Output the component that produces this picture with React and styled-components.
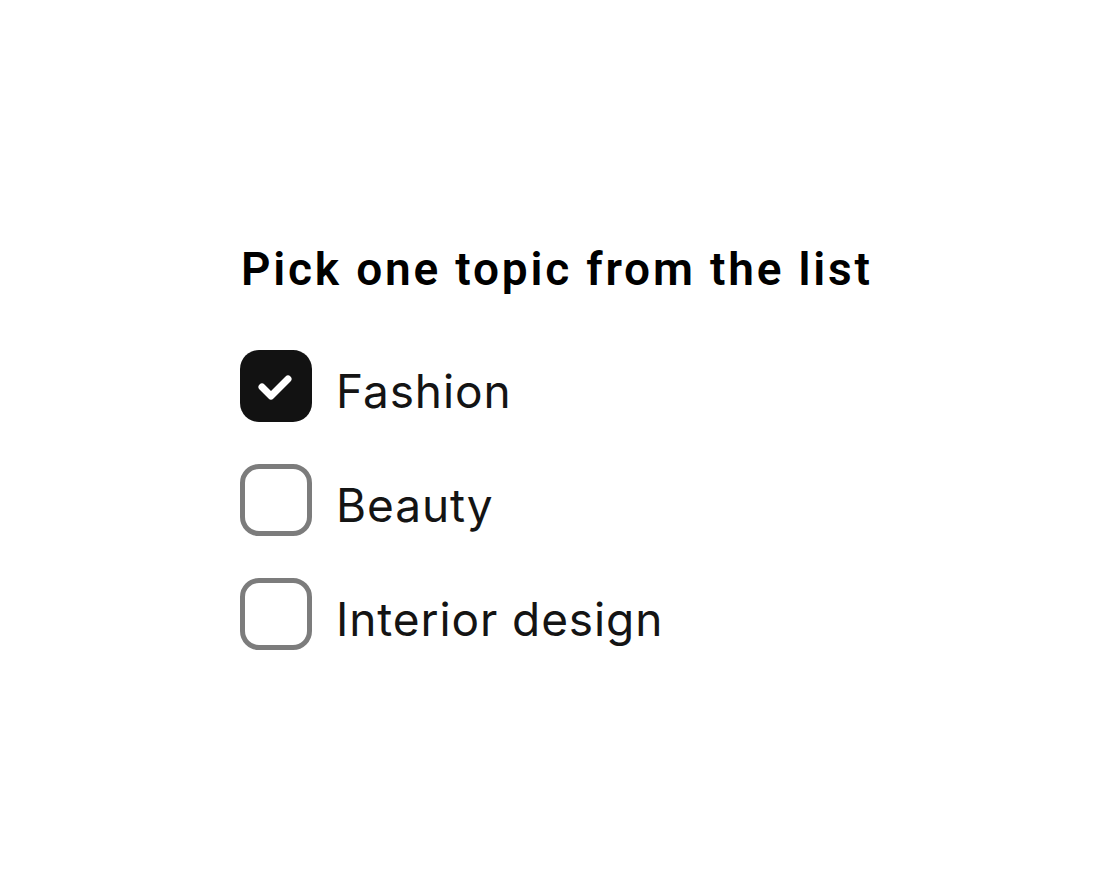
import React, { useState } from "react";
import styled, { createGlobalStyle } from "styled-components";

const Global = createGlobalStyle`
  html, body { margin: 0; padding: 0; background: #fff; }
  body { font-family: Inter, "Noto Sans", sans-serif; }
`;

const Page = styled.div`
  width: 1107px;
  height: 888px;
  display: flex;
  justify-content: flex-start;
  align-items: flex-start;
  padding: 242px 0 0 240px;
  box-sizing: border-box;
`;

const Group = styled.fieldset`
  border: 0;
  margin: 0;
  padding: 0;
  display: flex;
  flex-direction: column;
`;

const Legend = styled.legend`
  padding: 0;
  margin: 0 0 54px 1px;
  font-family: Roboto, sans-serif;
  font-weight: 600;
  font-size: 46px;
  line-height: 54px;
  color: #000;
  letter-spacing: 2.8px;
`;

const List = styled.div`
  display: flex;
  flex-direction: column;
  gap: 42px;
`;

const Row = styled.label`
  display: flex;
  align-items: center;
  gap: 24px;
  cursor: pointer;
`;

const Box = styled.span`
  width: 72px;
  height: 72px;
  box-sizing: border-box;
  border-radius: 19px;
  display: flex;
  align-items: center;
  justify-content: center;
  background: ${(p) => (p.$checked ? "#121212" : "#fff")};
  border: ${(p) => (p.$checked ? "none" : "5px solid #7c7c7c")};
`;

const Check = styled.svg`
  display: block;
`;

const Label = styled.span`
  font-family: Inter, sans-serif;
  font-size: 46px;
  letter-spacing: 0.9px;
  color: #141414;
  line-height: 1;
  padding-top: 10px;
`;

const items = ["Fashion", "Beauty", "Interior design"];

export default function App() {
  const [sel, setSel] = useState(0);
  return (
    <>
      <Global />
      <Page>
        <Group>
          <Legend>Pick one topic from the list</Legend>
          <List>
            {items.map((t, i) => (
              <Row key={t} onClick={() => setSel(i)}>
                <Box $checked={sel === i}>
                  {sel === i && (
                    <Check width="72" height="72" viewBox="0 0 72 72" fill="none">
                      <path d="M22 37L31 46L48 29" stroke="#fff" strokeWidth="7" strokeLinecap="round" strokeLinejoin="round" />
                    </Check>
                  )}
                </Box>
                <Label>{t}</Label>
              </Row>
            ))}
          </List>
        </Group>
      </Page>
    </>
  );
}
